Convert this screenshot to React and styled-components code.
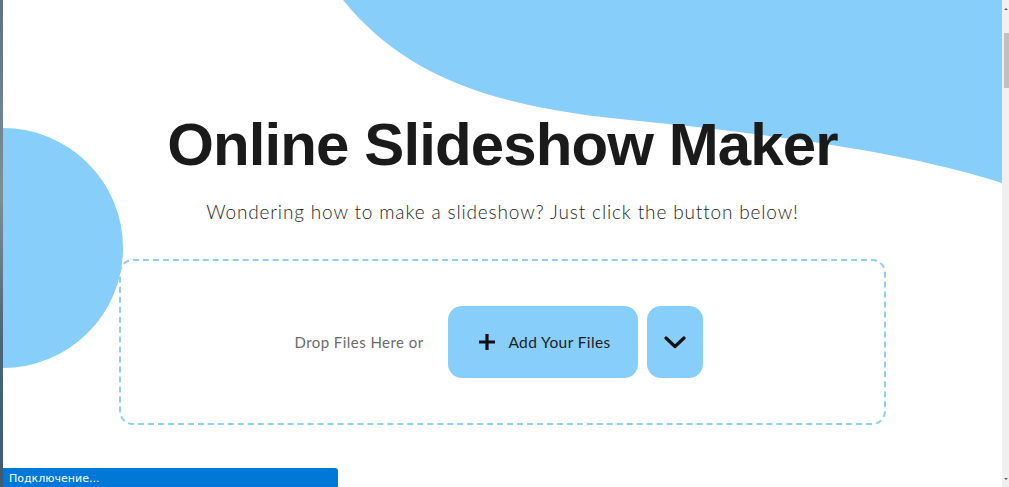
import React from "react";
import styled, { createGlobalStyle } from "styled-components";

const GlobalStyle = createGlobalStyle`
  html, body {
    margin: 0;
    padding: 0;
    height: 100%;
    overflow: hidden;
    background: #ffffff;
  }
  #root {
    height: 100%;
  }
`;

const Screen = styled.div`
  display: flex;
  width: 1009px;
  height: 487px;
`;

const DesktopEdge = styled.div`
  width: 3px;
  background: linear-gradient(180deg, #5d7384 0%, #7f8e96 40%, #4b6478 70%, #3d5a73 100%);
`;

const Page = styled.main`
  position: relative;
  flex: 1;
  overflow: hidden;
  background: #ffffff;
`;

const Backdrop = styled.svg`
  position: absolute;
  top: 0;
  left: 0;
  z-index: 0;
`;

const Hero = styled.section`
  position: relative;
  z-index: 1;
  display: flex;
  flex-direction: column;
  align-items: center;
  padding-top: 115px;
`;

const Title = styled.h1`
  margin: 0;
  font-family: "Liberation Sans", Arial, sans-serif;
  font-weight: 700;
  font-size: 60px;
  line-height: 60px;
  letter-spacing: -0.9px;
  color: #1a1a1a;
`;

const Subtitle = styled.p`
  margin: 25px 0 0;
  font-family: Lato, "Liberation Sans", sans-serif;
  font-weight: 300;
  font-size: 19px;
  line-height: 24px;
  letter-spacing: 0.85px;
  color: #262626;
`;

const DropZone = styled.div`
  margin-top: 35px;
  width: 767px;
  height: 166px;
  box-sizing: border-box;
  border: 2px dashed #8fd0f0;
  border-radius: 14px;
  display: flex;
  align-items: center;
  justify-content: center;
  padding-right: 8px;
`;

const DropText = styled.span`
  font-family: Lato, "Liberation Sans", sans-serif;
  font-size: 15px;
  letter-spacing: 0.45px;
  color: #6b6b6b;
  margin-right: 24px;
`;

const ButtonGroup = styled.div`
  display: flex;
  gap: 9px;
`;

const ActionButton = styled.button`
  display: flex;
  align-items: center;
  justify-content: center;
  gap: 12px;
  width: ${(p) => p.$width}px;
  height: 72px;
  padding: 0 0 0 ${(p) => p.$shift || 0}px;
  border: none;
  border-radius: 14px;
  background: #87cefa;
  color: #1d1d1d;
  font-family: Lato, "Liberation Sans", sans-serif;
  font-size: 15.5px;
  letter-spacing: 0.4px;
  cursor: pointer;
`;

const StatusBar = styled.div`
  position: absolute;
  left: 0;
  bottom: 0;
  z-index: 2;
  width: 335px;
  height: 19px;
  box-sizing: border-box;
  padding: 3px 6px 0;
  background: #0078d7;
  border-top-right-radius: 3px;
  color: #ffffff;
  font-family: "DejaVu Sans", "Liberation Sans", sans-serif;
  font-size: 11px;
  line-height: 16px;
`;

const Scrollbar = styled.div`
  position: relative;
  width: 7px;
  background: #f0f0f0;
`;

const ScrollThumb = styled.div`
  position: absolute;
  top: 33px;
  right: 0;
  width: 5px;
  height: 55px;
  background: #c1c1c1;
`;

const ScrollArrow = styled.div`
  position: absolute;
  right: 1px;
  ${(p) => (p.$down ? "bottom: 7px;" : "top: 8px;")}
  width: 0;
  height: 0;
  border-left: 2px solid transparent;
  border-right: 2px solid transparent;
  ${(p) =>
    p.$down ? "border-top: 2px solid #606060;" : "border-bottom: 2px solid #606060;"}
`;

const PlusIcon = () => (
  <svg width="18" height="18" viewBox="0 0 18 18">
    <path d="M9 1v16M1 9h16" stroke="#111" strokeWidth="3.2" />
  </svg>
);

const ChevronIcon = () => (
  <svg width="22" height="14" viewBox="0 0 22 14">
    <path
      d="M2 3l9 8.5L20 3"
      fill="none"
      stroke="#111"
      strokeWidth="3.2"
      strokeLinecap="round"
      strokeLinejoin="round"
    />
  </svg>
);

export default function App() {
  return (
    <>
      <GlobalStyle />
      <Screen>
        <DesktopEdge />
        <Page>
          <Backdrop width="999" height="487" viewBox="0 0 999 487">
            <path
              d="M340 0 C397 70 477 105 617 119 C757 133 897 150 999 183 L999 0 Z"
              fill="#87cefa"
            />
            <circle cx="0" cy="248" r="120" fill="#87cefa" />
          </Backdrop>
          <Hero>
            <Title>Online Slideshow Maker</Title>
            <Subtitle>
              Wondering how to make a slideshow? Just click the button below!
            </Subtitle>
            <DropZone>
              <DropText>Drop Files Here or</DropText>
              <ButtonGroup>
                <ActionButton $width={190} $shift={4}>
                  <PlusIcon />
                  Add Your Files
                </ActionButton>
                <ActionButton $width={56} aria-label="More options">
                  <ChevronIcon />
                </ActionButton>
              </ButtonGroup>
            </DropZone>
          </Hero>
          <StatusBar>Подключение...</StatusBar>
        </Page>
        <Scrollbar>
          <ScrollArrow />
          <ScrollThumb />
          <ScrollArrow $down />
        </Scrollbar>
      </Screen>
    </>
  );
}
